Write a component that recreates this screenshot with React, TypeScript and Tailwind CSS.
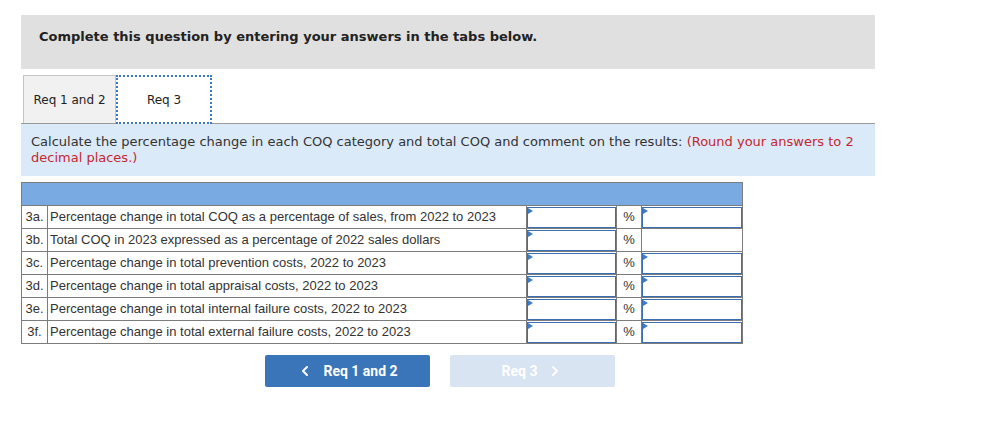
import { ChevronLeft, ChevronRight } from 'lucide-react';

const ROWS = [
  { n: '3a.', text: 'Percentage change in total COQ as a percentage of sales, from 2022 to 2023', comment: true },
  { n: '3b.', text: 'Total COQ in 2023 expressed as a percentage of 2022 sales dollars', comment: false },
  { n: '3c.', text: 'Percentage change in total prevention costs, 2022 to 2023', comment: true },
  { n: '3d.', text: 'Percentage change in total appraisal costs, 2022 to 2023', comment: true },
  { n: '3e.', text: 'Percentage change in total internal failure costs, 2022 to 2023', comment: true },
  { n: '3f.', text: 'Percentage change in total external failure costs, 2022 to 2023', comment: true },
];

function AnswerBox() {
  return (
    <div className="relative h-[21px] border border-[#3a6fb3] bg-white">
      <span className="absolute left-0 top-0 w-0 h-0 border-y-[3px] border-y-transparent border-l-[5px] border-l-[#3d7cc9]" />
    </div>
  );
}

export default function App() {
  return (
    <div className="w-[983px] h-[442px] bg-white pt-[15px] pl-[21px]">
      <div className="w-[854px] h-[54px] bg-[#e0e0e0] pl-[18px] pt-[12px]">
        <p className="font-['DejaVu_Sans',Verdana,sans-serif] font-bold text-[13px] leading-[20px] text-[#222]">
          Complete this question by entering your answers in the tabs below.
        </p>
      </div>

      {/* Tabs */}
      <div className="w-[854px] mt-[6px] flex items-end border-b border-[#9a9a9a] pl-[2px]">
        <div className="w-[93px] h-[48px] bg-[#f1f1f1] border border-b-0 border-[#c4c4c4] flex items-center justify-center font-['DejaVu_Sans',Verdana,sans-serif] text-[12px] text-[#222]">
          Req 1 and 2
        </div>
        <div className="w-[96px] h-[49px] -mb-px bg-white border-2 border-dotted border-[#3d78c2] flex items-center justify-center font-['DejaVu_Sans',Verdana,sans-serif] text-[12px] text-[#222]">
          Req 3
        </div>
      </div>

      <div className="w-[854px] h-[52px] bg-[#dbeaf8] px-[10px] pt-[10px] font-['DejaVu_Sans',Verdana,sans-serif] text-[13px] leading-[16px] text-[#333]">
        <p>
          Calculate the percentage change in each COQ category and total COQ and comment on the results:{' '}
          <span className="text-[#c4272f]">(Round your answers to 2 decimal places.)</span>
        </p>
      </div>

      <table className="mt-[6px] w-[722px] border-collapse font-['Liberation_Sans',Arial,sans-serif] text-[13px] text-[#333]">
        <tbody>
          <tr className="h-[23px] bg-[#79abe2]">
            <td colSpan={5} className="border border-[#7c7c7c]" />
          </tr>
          {ROWS.map((r) => (
            <tr key={r.n} className="h-[23px]">
              <td className="w-[26px] border border-[#7c7c7c] text-center px-0">{r.n}</td>
              <td className="w-[480px] border border-[#7c7c7c] pl-[2px]">{r.text}</td>
              <td className="w-[90px] border border-[#7c7c7c] p-0">
                <AnswerBox />
              </td>
              <td className="w-[25px] border border-[#7c7c7c] text-center">%</td>
              <td className="w-[101px] border border-[#7c7c7c] p-0">{r.comment && <AnswerBox />}</td>
            </tr>
          ))}
        </tbody>
      </table>

      <div className="mt-[11px] ml-[244px] flex gap-[20px] font-['Roboto',Arial,sans-serif] font-bold text-[14px]">
        <button className="w-[165px] h-[32px] rounded-[2px] bg-[#3a75ba] text-white flex items-center justify-center gap-[10px]">
          <ChevronLeft size={16} strokeWidth={3} />
          <span>Req 1 and 2</span>
        </button>
        <button className="w-[165px] h-[32px] rounded-[2px] bg-[#d8e4f2] text-white flex items-center justify-center gap-[10px]">
          <span>Req 3</span>
          <ChevronRight size={16} strokeWidth={3} />
        </button>
      </div>
    </div>
  );
}
